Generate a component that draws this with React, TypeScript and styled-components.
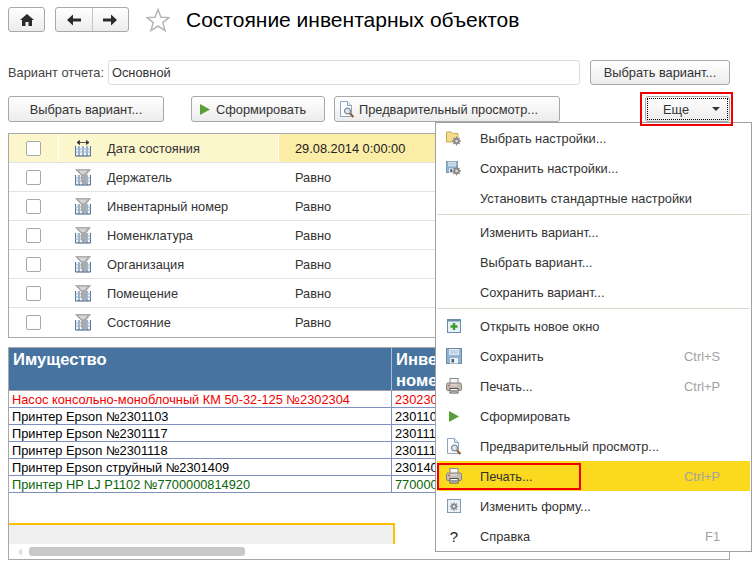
import React from "react";
import styled, { createGlobalStyle } from "styled-components";

const GlobalStyle = createGlobalStyle`
  html, body {
    margin: 0;
    padding: 0;
    background: #fff;
  }
  * {
    box-sizing: border-box;
  }
`;

const Page = styled.div`
  position: relative;
  width: 754px;
  height: 565px;
  overflow: hidden;
  background: #fff;
  font-family: "Liberation Sans", Arial, sans-serif;
  font-size: 12.8px;
  color: #333;
`;

const TopBar = styled.div`
  display: flex;
  align-items: center;
  height: 25px;
  margin: 7px 24px 0 8px;
`;

const NavGroup = styled.div<{ $width: number }>`
  display: flex;
  width: ${(p) => p.$width}px;
  height: 25px;
  margin-right: 10px;
  border: 1px solid #a8a8a8;
  border-radius: 3px;
  background: linear-gradient(#ffffff, #ececec);
`;

const NavButton = styled.div`
  flex: 1;
  display: flex;
  align-items: center;
  justify-content: center;
  & + & {
    border-left: 1px solid #c4c4c4;
  }
`;

const StarWrap = styled.div`
  display: flex;
  margin: 0 16px 0 7px;
`;

const Title = styled.h1`
  margin: 0;
  font-size: 21px;
  font-weight: normal;
  color: #000;
  white-space: nowrap;
`;

const VariantRow = styled.div`
  display: flex;
  align-items: center;
  height: 25px;
  margin: 28px 24px 0 8px;
`;

const Label = styled.span`
  width: 100px;
  color: #444;
  white-space: nowrap;
`;

const Input = styled.div`
  width: 472px;
  height: 25px;
  margin-right: 10px;
  padding-left: 3px;
  line-height: 24px;
  color: #333;
  border: 1px solid #dcdcdc;
  border-radius: 3px;
`;

const Button = styled.div<{ $width: number; $height?: number; $left?: number }>`
  display: flex;
  align-items: center;
  justify-content: center;
  flex: none;
  width: ${(p) => p.$width}px;
  height: ${(p) => p.$height ?? 26}px;
  margin-left: ${(p) => p.$left ?? 0}px;
  color: #333;
  white-space: nowrap;
  border: 1px solid #a8a8a8;
  border-radius: 3px;
  background: linear-gradient(#ffffff, #ececec);
`;

const IconButton = styled(Button)<{ $pad: number; $gap: number }>`
  justify-content: flex-start;
  padding-left: ${(p) => p.$pad}px;
  gap: ${(p) => p.$gap}px;
`;

const MoreButton = styled(Button)`
  position: relative;
  z-index: 2;
  margin-left: auto;
  justify-content: flex-start;
  padding-left: 17px;
  &::before {
    content: "";
    position: absolute;
    inset: 1px;
    border: 1px dotted #000;
  }
  &::after {
    content: "";
    position: absolute;
    inset: -5px -4px -5px -6px;
    border: 2px solid #f00000;
  }
`;

const Caret = styled.span`
  position: absolute;
  right: 9px;
  top: 10px;
  width: 0;
  height: 0;
  border-left: 4px solid transparent;
  border-right: 4px solid transparent;
  border-top: 4px solid #333;
`;

const ActionRow = styled.div`
  display: flex;
  align-items: center;
  height: 26px;
  margin: 11px 24px 0 8px;
`;

const SettingsBox = styled.div`
  margin: 11px 24px 0 8px;
  border: 1px solid #a8a8a8;
`;

const SettingsRow = styled.div<{ $active?: boolean }>`
  display: grid;
  grid-template-columns: 50px 220px 1fr;
  height: 29px;
  background: ${(p) => (p.$active ? "#fcf6cd" : "#fff")};
  border-bottom: 1px solid #e2e2e2;
  &:last-child {
    border-bottom-color: transparent;
  }
`;

const CheckCell = styled.div`
  display: flex;
  align-items: center;
  padding-left: 17px;
  border-right: 1px solid #fff;
`;

const CheckBox = styled.span`
  width: 15px;
  height: 15px;
  background: #fff;
  border: 1px solid #a8a8a8;
  border-radius: 2px;
`;

const NameCell = styled.div`
  display: flex;
  align-items: center;
  gap: 16px;
  padding-left: 16px;
  border-right: 1px solid #fff;
`;

const ValueCell = styled.div<{ $active?: boolean }>`
  display: flex;
  align-items: center;
  padding-left: 16px;
  background: ${(p) => (p.$active ? "#fbeca6" : "transparent")};
  color: ${(p) => (p.$active ? "#222" : "#333")};
`;

const ReportBox = styled.div`
  display: flex;
  flex-direction: column;
  height: 213px;
  margin: 9px 24px 0 8px;
  border: 1px solid #a8a8a8;
`;

const ReportScroll = styled.div`
  flex: 1;
  overflow: hidden;
`;

const ReportHead = styled.div`
  display: grid;
  grid-template-columns: 382px 44px;
  height: 43px;
  background: #46739f;
  color: #fff;
  font-size: 16.6px;
  font-weight: bold;
  line-height: 21px;
  border-bottom: 1px solid #a0a0a0;
`;

const HeadCell = styled.div`
  padding: 1px 0 0 4px;
  overflow: hidden;
  white-space: nowrap;
  & + & {
    border-left: 1px solid #a9bfd8;
  }
`;

const ReportRow = styled.div<{ $color: string }>`
  display: grid;
  grid-template-columns: 382px 44px;
  height: 17px;
  color: ${(p) => p.$color};
  line-height: 18px;
  border-bottom: 1px solid #7f8fc0;
`;

const ReportCell = styled.div`
  padding-left: 3px;
  overflow: hidden;
  white-space: nowrap;
  & + & {
    border-left: 1px solid #7f8fc0;
  }
`;

const TotalsBlock = styled.div`
  width: 386px;
  height: 21px;
  margin-top: 30px;
  background: #f0f0f0;
  border-top: 2px solid #fcc000;
  border-right: 2px solid #fcc000;
`;

const ScrollBar = styled.div`
  display: flex;
  align-items: center;
  flex: none;
  height: 15px;
  padding-left: 9px;
  background: #fff;
`;

const ScrollArrow = styled.span`
  width: 0;
  height: 0;
  margin-right: 7px;
  border-top: 4px solid transparent;
  border-bottom: 4px solid transparent;
  border-right: 4px solid #dedede;
`;

const ScrollThumb = styled.span`
  width: 216px;
  height: 9px;
  background: #c8c8c8;
  border-radius: 3px;
`;

const Menu = styled.div`
  position: absolute;
  z-index: 1;
  left: 435px;
  top: 122px;
  width: 317px;
  padding: 0 1px;
  background: #fff;
  border: 1px solid #a0a0a0;
`;

const MenuRow = styled.div<{ $active?: boolean }>`
  position: relative;
  display: flex;
  align-items: center;
  height: 30px;
  color: #333;
  background: ${(p) => (p.$active ? "#fbd91e" : "transparent")};
`;

const MenuIcon = styled.span`
  display: flex;
  align-items: center;
  justify-content: center;
  flex: none;
  width: 16px;
  margin: 0 18px 0 9px;
  color: #222;
  font-size: 15px;
`;

const Shortcut = styled.span`
  margin-left: auto;
  margin-right: 30px;
  color: #a2a2a2;
`;

const MenuSep = styled.div`
  height: 4px;
  padding-top: 1px;
  &::before {
    content: "";
    display: block;
    height: 1px;
    background: #dcd8cc;
  }
`;

const Callout = styled.span`
  position: absolute;
  left: 0;
  top: 2px;
  width: 144px;
  height: 27px;
  border: 2px solid #f00000;
`;

const HomeIcon = () => (
  <svg width="14" height="12" viewBox="0 0 14 12">
    <path d="M7 0 L14 6 L12 6 L12 12 L8.5 12 L8.5 8 L5.5 8 L5.5 12 L2 12 L2 6 L0 6 Z" fill="#2b2b2b" />
  </svg>
);

const ArrowIcon = ({ right }: { right?: boolean }) => (
  <svg width="14" height="12" viewBox="0 0 14 12">
    <path
      d={right ? "M14 6 L8 0.5 L8 4.5 L0 4.5 L0 7.5 L8 7.5 L8 11.5 Z" : "M0 6 L6 0.5 L6 4.5 L14 4.5 L14 7.5 L6 7.5 L6 11.5 Z"}
      fill="#2b2b2b"
    />
  </svg>
);

const StarIcon = () => (
  <svg width="24" height="24" viewBox="0 0 24 24">
    <path
      d="M12 1.5 L15 9.2 L23 9.6 L16.8 14.6 L19 22.6 L12 18 L5 22.6 L7.2 14.6 L1 9.6 L9 9.2 Z"
      fill="#fff"
      stroke="#b4b4b4"
      strokeWidth="1.5"
    />
  </svg>
);

const PlayIcon = () => (
  <svg width="10" height="11" viewBox="0 0 10 11">
    <path d="M0 0 L10 5.5 L0 11 Z" fill="#5a9e3a" />
  </svg>
);

const PreviewIcon = () => (
  <svg width="16" height="17" viewBox="0 0 16 17">
    <path d="M1.5 0.5 H8.5 L12.5 4.5 V15.5 H1.5 Z" fill="#fafcff" stroke="#8ea6bd" />
    <path d="M8.5 0.5 V4.5 H12.5" fill="#dfe8f1" stroke="#8ea6bd" />
    <circle cx="8.5" cy="10" r="3" fill="#d8e8f4" stroke="#6a6a6a" />
    <path d="M11 12.5 L14.5 16" stroke="#8a5a2c" strokeWidth="2" />
  </svg>
);

const GridBase = ({ top }: { top: number }) => (
  <g>
    <rect x="0.5" y={top} width="15" height={16 - top} fill="#eef3f8" />
    <path d={`M0.5 ${top} V16 M4 ${top} V16 M8 ${top} V16 M12 ${top} V16 M15.5 ${top} V16`} stroke="#4f7398" />
    <path d="M0.5 16 H15.5" stroke="#3a5a7c" />
    <path d={`M0.5 ${top + 3} H15.5 M0.5 ${top + 6} H15.5`} stroke="#9db6cd" />
  </g>
);

const FilterIcon = () => (
  <svg width="16" height="17" viewBox="0 0 16 17">
    <GridBase top={6} />
    <path d="M0.5 0.5 H15.5 L10.5 6.5 V15 L6.5 13 V6.5 Z" fill="#ababab" stroke="#969696" strokeWidth="0.6" />
    <path d="M3.5 1.5 H12.5 L9.5 5 H6.5 Z" fill="#d6d6d6" />
  </svg>
);

const DateIcon = () => (
  <svg width="16" height="17" viewBox="0 0 16 17">
    <GridBase top={6} />
    <path d="M2 2.5 H14 M2 2.5 L4.5 0.5 V4.5 Z M14 2.5 L11.5 0.5 V4.5 Z" stroke="#333" strokeWidth="0.8" fill="#333" />
  </svg>
);

const Gear = ({ x, y, scale = 0.8 }: { x: number; y: number; scale?: number }) => (
  <g transform={`translate(${x} ${y}) scale(${scale})`}>
    <circle r="4" fill="#8a8a8a" />
    <path d="M0 -5.5 V5.5 M-5.5 0 H5.5 M-3.9 -3.9 L3.9 3.9 M-3.9 3.9 L3.9 -3.9" stroke="#8a8a8a" strokeWidth="1.6" />
    <circle r="1.6" fill="#e4e4e4" />
  </g>
);

const FolderGearIcon = () => (
  <svg width="16" height="15" viewBox="0 0 16 15">
    <path d="M0.5 1 H5.5 L7 2.5 H12 V5 L11 11 H0.5 Z" fill="#f5dc8c" stroke="#c9a94f" />
    <Gear x={10.5} y={10} />
  </svg>
);

const Floppy = () => (
  <g>
    <rect x="0.5" y="0.5" width="15" height="15" fill="#8fb3d0" stroke="#6a8cab" />
    <rect x="3" y="1" width="10" height="6" fill="#dfeaf4" />
    <path d="M4 3 H12 M4 5 H12" stroke="#a6bfd4" />
    <rect x="4" y="10" width="8" height="5.5" fill="#eef2f6" />
    <rect x="5.5" y="11" width="2.5" height="3.5" fill="#4b5f72" />
  </g>
);

const FloppyGearIcon = () => (
  <svg width="16" height="15" viewBox="0 0 16 15">
    <g transform="scale(0.75)">
      <Floppy />
    </g>
    <Gear x={10.5} y={10} />
  </svg>
);

const NewWindowIcon = () => (
  <svg width="14" height="14" viewBox="0 0 14 14">
    <rect x="0.5" y="0.5" width="13" height="13" fill="#e6f0f6" stroke="#6a8ea8" />
    <rect x="0.5" y="0.5" width="13" height="2" fill="#6a8ea8" />
    <path d="M7 4 V11 M3.5 7.5 H10.5" stroke="#3c9a2f" strokeWidth="2.4" />
  </svg>
);

const FloppyIcon = () => (
  <svg width="16" height="16" viewBox="0 0 16 16">
    <Floppy />
  </svg>
);

const PrinterIcon = () => (
  <svg width="16" height="16" viewBox="0 0 16 16">
    <rect x="4" y="0.5" width="8" height="5" fill="#f4f4f4" stroke="#8a8a8a" />
    <rect x="0.5" y="5" width="15" height="7.5" rx="1.5" fill="#c4bbb6" stroke="#8a827d" />
    <circle cx="3" cy="7.5" r="0.8" fill="#c0392b" />
    <path d="M5 7 H11" stroke="#ece8e4" />
    <rect x="4" y="10.5" width="8" height="4.5" fill="#fff" stroke="#55504c" />
    <path d="M5 13 H11" stroke="#333" />
  </svg>
);

const FormIcon = () => (
  <svg width="14" height="14" viewBox="0 0 14 14">
    <rect x="0.5" y="0.5" width="13" height="13" fill="#e8eff5" stroke="#7f9cb5" />
    <Gear x={7} y={7.5} scale={0.75} />
  </svg>
);

const settings = [
  { name: "Дата состояния", value: "29.08.2014 0:00:00", active: true },
  { name: "Держатель", value: "Равно" },
  { name: "Инвентарный номер", value: "Равно" },
  { name: "Номенклатура", value: "Равно" },
  { name: "Организация", value: "Равно" },
  { name: "Помещение", value: "Равно" },
  { name: "Состояние", value: "Равно" },
];

const reportRows = [
  { name: "Насос консольно-моноблочный КМ 50-32-125 №2302304", num: "2302304", color: "#f00000" },
  { name: "Принтер Epson №2301103", num: "2301103", color: "#000" },
  { name: "Принтер Epson №2301117", num: "2301117", color: "#000" },
  { name: "Принтер Epson №2301118", num: "2301118", color: "#000" },
  { name: "Принтер Epson струйный №2301409", num: "2301409", color: "#000" },
  { name: "Принтер HP LJ P1102 №7700000814920", num: "7700000814920", color: "#0a640a" },
];

type MenuItem = {
  text?: string;
  icon?: React.ReactNode;
  shortcut?: string;
  active?: boolean;
};

const menuItems: MenuItem[] = [
  { text: "Выбрать настройки...", icon: <FolderGearIcon /> },
  { text: "Сохранить настройки...", icon: <FloppyGearIcon /> },
  { text: "Установить стандартные настройки" },
  {},
  { text: "Изменить вариант..." },
  { text: "Выбрать вариант..." },
  { text: "Сохранить вариант..." },
  {},
  { text: "Открыть новое окно", icon: <NewWindowIcon /> },
  { text: "Сохранить", icon: <FloppyIcon />, shortcut: "Ctrl+S" },
  { text: "Печать...", icon: <PrinterIcon />, shortcut: "Ctrl+P" },
  { text: "Сформировать", icon: <PlayIcon /> },
  { text: "Предварительный просмотр...", icon: <PreviewIcon /> },
  { text: "Печать...", icon: <PrinterIcon />, shortcut: "Ctrl+P", active: true },
  { text: "Изменить форму...", icon: <FormIcon /> },
  { text: "Справка", icon: "?", shortcut: "F1" },
];

const App = () => {
  return (
    <Page>
      <GlobalStyle />
      <TopBar>
        <NavGroup $width={37}>
          <NavButton>
            <HomeIcon />
          </NavButton>
        </NavGroup>
        <NavGroup $width={74}>
          <NavButton>
            <ArrowIcon />
          </NavButton>
          <NavButton>
            <ArrowIcon right />
          </NavButton>
        </NavGroup>
        <StarWrap>
          <StarIcon />
        </StarWrap>
        <Title>Состояние инвентарных объектов</Title>
      </TopBar>

      <VariantRow>
        <Label>Вариант отчета:</Label>
        <Input>Основной</Input>
        <Button $width={140} $height={25}>
          Выбрать вариант...
        </Button>
      </VariantRow>

      <ActionRow>
        <Button $width={156}>Выбрать вариант...</Button>
        <IconButton $width={134} $left={27} $pad={8} $gap={6}>
          <PlayIcon />
          Сформировать
        </IconButton>
        <IconButton $width={226} $left={9} $pad={4} $gap={4}>
          <PreviewIcon />
          Предварительный просмотр...
        </IconButton>
        <MoreButton $width={85}>
          Еще
          <Caret />
        </MoreButton>
      </ActionRow>

      <SettingsBox>
        {settings.map((row) => (
          <SettingsRow key={row.name} $active={row.active}>
            <CheckCell>
              <CheckBox />
            </CheckCell>
            <NameCell>
              {row.active ? <DateIcon /> : <FilterIcon />}
              {row.name}
            </NameCell>
            <ValueCell $active={row.active}>{row.value}</ValueCell>
          </SettingsRow>
        ))}
      </SettingsBox>

      <ReportBox>
        <ReportScroll>
          <ReportHead>
            <HeadCell>Имущество</HeadCell>
            <HeadCell>
              Инвентарный
              <br />
              номер
            </HeadCell>
          </ReportHead>
          {reportRows.map((row) => (
            <ReportRow key={row.num} $color={row.color}>
              <ReportCell>{row.name}</ReportCell>
              <ReportCell>{row.num}</ReportCell>
            </ReportRow>
          ))}
          <TotalsBlock />
        </ReportScroll>
        <ScrollBar>
          <ScrollArrow />
          <ScrollThumb />
        </ScrollBar>
      </ReportBox>

      <Menu>
        {menuItems.map((item, idx) =>
          item.text ? (
            <MenuRow key={idx} $active={item.active}>
              <MenuIcon>{item.icon}</MenuIcon>
              {item.text}
              {item.shortcut && <Shortcut>{item.shortcut}</Shortcut>}
              {item.active && <Callout />}
            </MenuRow>
          ) : (
            <MenuSep key={idx} />
          )
        )}
      </Menu>
    </Page>
  );
};

export default App;
